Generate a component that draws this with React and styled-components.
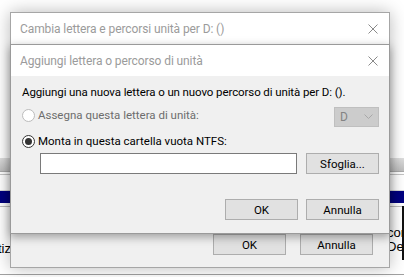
import React from 'react';
import styled, { createGlobalStyle } from 'styled-components';

const Global = createGlobalStyle`
    html, body {
        margin: 0;
        padding: 0;
        width: 404px;
        height: 277px;
        overflow: hidden;
        background: #fff;
    }
    * { box-sizing: border-box; }
`

const Desktop = styled.div`
    position: relative;
    width: 404px;
    height: 277px;
    overflow: hidden;
    background: #fff;
    display: flex;
    flex-direction: column;
    font-family: Roboto, "Noto Sans", sans-serif;
    font-size: 11.5px;
`

const Blank = styled.div`
    height: ${p => p.$h}px;
    flex: none;
`

const GreyBand = styled.div`
    height: 14px;
    flex: none;
    background: linear-gradient(#dedede, #bdbdbd);
    border-bottom: 1px solid #a9a9a9;
`

const ThinLines = styled.div`
    height: 17px;
    flex: none;
    border-top: 1px solid #c4c4c4;
    border-bottom: 1px solid #d8d8d8;
    margin-top: 2px;
`

const NavyBand = styled.div`
    height: 15px;
    flex: none;
    background: #000080;
    border-bottom: 3px solid #fff;
    box-shadow: 0 1px 0 #bdbdbd;
`

const LowerArea = styled.div`
    flex: 1;
    display: flex;
    justify-content: space-between;
    border-bottom: 1px solid #a0a0a0;
    margin-bottom: 2px;
`

const SideCell = styled.div`
    font-family: "Liberation Sans", sans-serif;
    font-size: 13px;
    color: #000;
    line-height: 14px;
    white-space: nowrap;
    overflow: hidden;
    padding-top: ${p => p.$top}px;
    ${p => p.$right ? `
        width: 17px;
        border-right: 2px solid #111;
        margin-bottom: 14px;
    ` : `
        width: 11px;
        display: flex;
        justify-content: flex-end;
    `}
`

const Window = styled.div`
    position: absolute;
    left: 10px;
    top: ${p => p.$top}px;
    width: 380px;
    height: ${p => p.$h}px;
    background: #f0f0f0;
    border: 1px solid ${p => p.$inner ? '#9a9a9a' : '#a6a6a6'};
    box-shadow: ${p => p.$inner
        ? '0 3px 9px rgba(0,0,0,0.35)'
        : '0 0 16px rgba(0,0,0,0.28)'};
    display: flex;
    flex-direction: column;
`

const TitleBar = styled.div`
    height: 31px;
    flex: none;
    background: #fff;
    display: flex;
    align-items: center;
    justify-content: space-between;
    padding: 0 8px 0 9px;
    color: #9b9b9b;
    font-size: 12px;
    letter-spacing: -0.1px;
`

const Close = styled.svg`
    width: 10px;
    height: 10px;
    margin-right: 3px;
`

const OuterBody = styled.div`
    flex: 1;
    display: flex;
    align-items: flex-end;
    justify-content: flex-end;
    padding: 0 16px 12px 0;
    gap: 14px;
`

const InnerBody = styled.div`
    flex: 1;
    display: flex;
    flex-direction: column;
    padding: 0 10px 0 11px;
    color: #000;
`

const Intro = styled.div`
    height: 15px;
    line-height: 15px;
    margin-top: 9px;
    white-space: nowrap;
    letter-spacing: -0.1px;
`

const Row = styled.div`
    display: flex;
    align-items: flex-start;
    justify-content: space-between;
    margin-top: ${p => p.$mt}px;
`

const RadioOption = styled.label`
    display: flex;
    align-items: center;
    gap: 3px;
    height: 15px;
    line-height: 15px;
    margin-top: ${p => p.$mt || 0}px;
    color: ${p => p.$disabled ? '#6d6d6d' : '#000'};
    white-space: nowrap;
`

const RadioCircle = styled.span`
    width: 13px;
    height: 13px;
    border-radius: 50%;
    border: 1px solid ${p => p.$disabled ? '#bcbcbc' : '#333'};
    background: #fff;
    display: flex;
    align-items: center;
    justify-content: center;

    &::after {
        content: "";
        width: 7px;
        height: 7px;
        border-radius: 50%;
        background: ${p => p.$checked ? '#333' : 'transparent'};
    }
`

const Combo = styled.div`
    width: 45px;
    height: 20px;
    background: #cccccc;
    border: 1px solid #bfbfbf;
    display: flex;
    align-items: center;
    justify-content: space-between;
    padding: 0 5px 0 5px;
    color: #838383;
    font-size: 12px;
`

const PathInput = styled.div`
    width: 257px;
    height: 21px;
    margin-left: 18px;
    background: #fff;
    border: 1px solid #7a7a7a;
`

const Button = styled.div`
    width: 73px;
    height: 21px;
    background: #e1e1e1;
    border: 1px solid #adadad;
    display: flex;
    align-items: center;
    justify-content: center;
    color: #000;
    font-size: 11.5px;
`

const ButtonRow = styled.div`
    display: flex;
    justify-content: flex-end;
    gap: ${p => p.$gap}px;
    margin-top: ${p => p.$mt}px;
`

function CloseIcon() {
    return (
        <Close viewBox="0 0 10 10">
            <path d="M0.5 0.5 L9.5 9.5 M9.5 0.5 L0.5 9.5" stroke="#8a8a8a" strokeWidth="1" fill="none" />
        </Close>
    )
}

export default function App() {
    return (
        <Desktop>
            <Global />
            <Blank $h={158} />
            <GreyBand />
            <ThinLines />
            <NavyBand />
            <LowerArea>
                <SideCell $top={36}>Partiz</SideCell>
                <SideCell $right $top={20}>con<br />Det</SideCell>
            </LowerArea>

            <Window $top={12} $h={256}>
                <TitleBar>
                    <span>Cambia lettera e percorsi unità per D: ()</span>
                    <CloseIcon />
                </TitleBar>
                <OuterBody>
                    <Button>OK</Button>
                    <Button>Annulla</Button>
                </OuterBody>
            </Window>

            <Window $inner $top={44} $h={190}>
                <TitleBar>
                    <span>Aggiungi lettera o percorso di unità</span>
                    <CloseIcon />
                </TitleBar>
                <InnerBody>
                    <Intro>Aggiungi una nuova lettera o un nuovo percorso di unità per D: ().</Intro>
                    <Row $mt={7}>
                        <RadioOption $disabled $mt={1}>
                            <RadioCircle $disabled />
                            Assegna questa lettera di unità:
                        </RadioOption>
                        <Combo>
                            <span>D</span>
                            <svg width="9" height="6" viewBox="0 0 9 6">
                                <path d="M0.5 0.5 L4.5 4.5 L8.5 0.5" stroke="#a8a8a8" fill="none" />
                            </svg>
                        </Combo>
                    </Row>
                    <Row $mt={7}>
                        <RadioOption>
                            <RadioCircle $checked />
                            Monta in questa cartella vuota NTFS:
                        </RadioOption>
                    </Row>
                    <Row $mt={4}>
                        <PathInput />
                        <Button>Sfoglia...</Button>
                    </Row>
                    <ButtonRow $gap={8} $mt={25}>
                        <Button>OK</Button>
                        <Button>Annulla</Button>
                    </ButtonRow>
                </InnerBody>
            </Window>
        </Desktop>
    )
}
